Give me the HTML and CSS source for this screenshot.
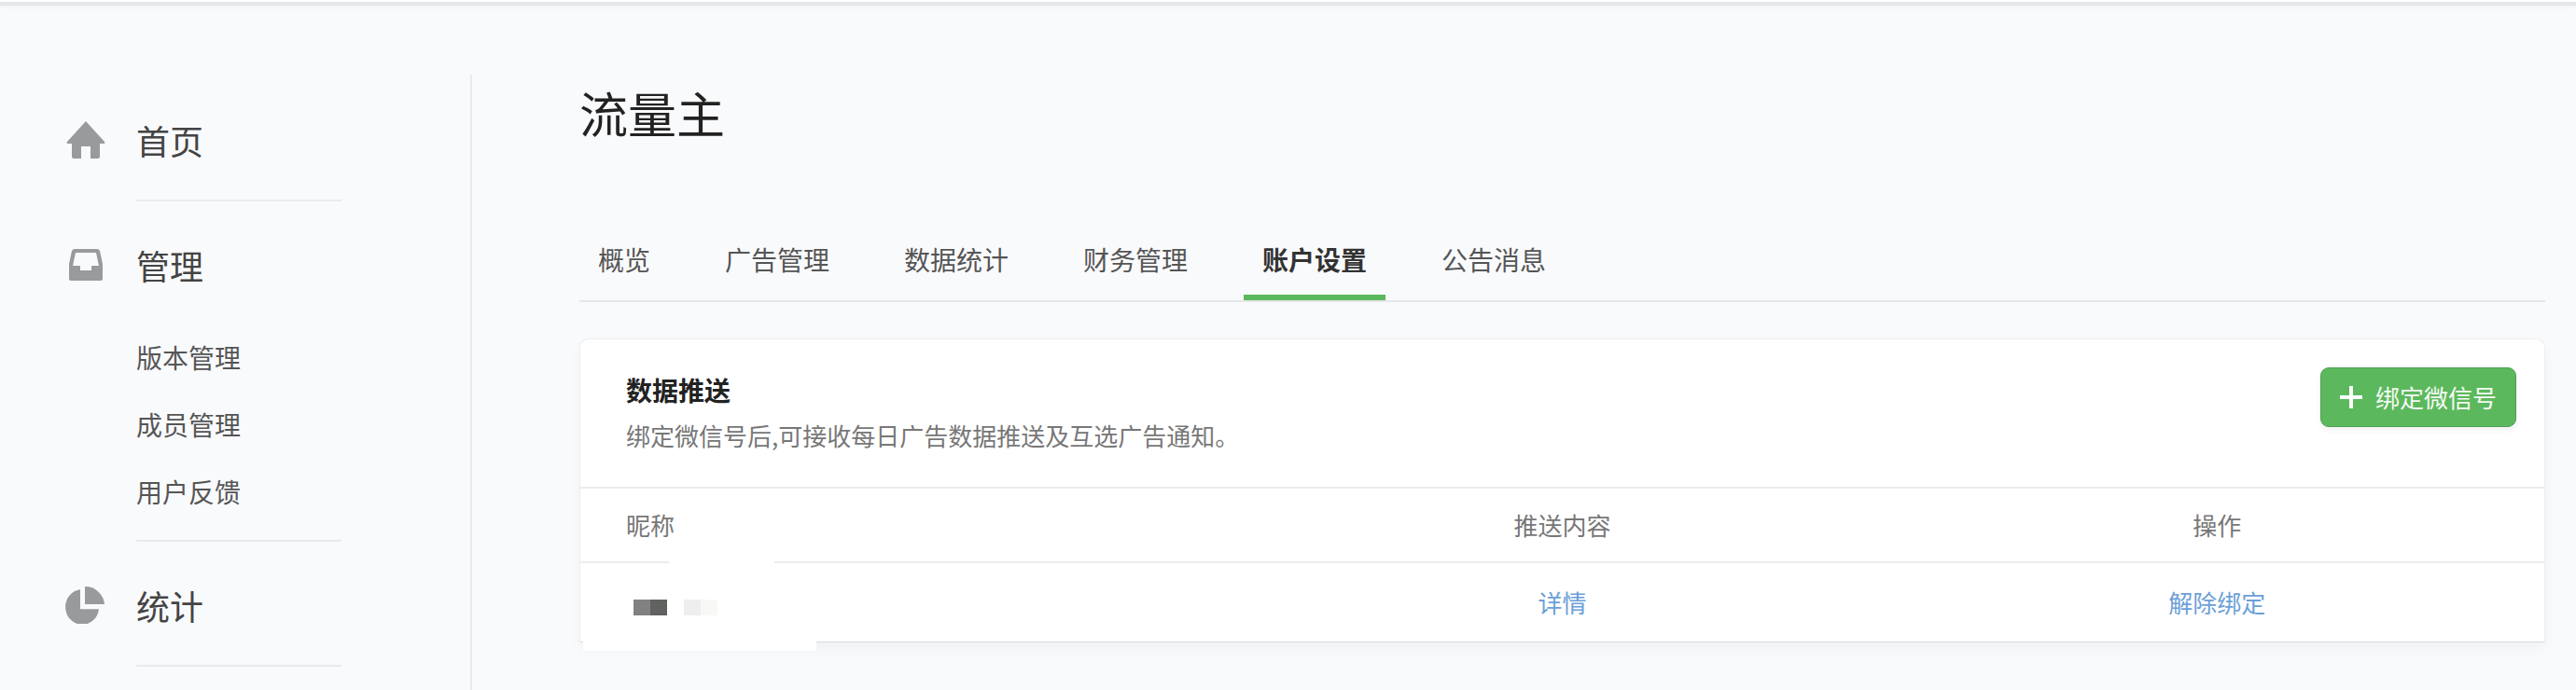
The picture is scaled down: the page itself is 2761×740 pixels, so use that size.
FILE: index.html
```html
<!DOCTYPE html>
<html lang="zh-CN">
<head>
  <meta charset="UTF-8" />
  <title>流量主</title>
  <link rel="stylesheet" href="styles.css">
</head>
<body>
  <div class="topbar"></div>

  <div class="layout">
    <!-- 侧边栏 -->
    <nav class="sidebar">
      <div class="nav-head">
        <svg class="nav-icon" viewBox="0 0 44 40" width="44" height="40">
          <path fill="#999a9c" d="M22 0 L42 22 Q43 24 41 24 L37 24 L37 38 Q37 40 35 40 L27 40 L27 27 L17 27 L17 40 L9 40 Q7 40 7 38 L7 24 L3 24 Q1 24 2 22 Z" />
        </svg>
        <span>首页</span>
      </div>
      <div class="nav-sep"></div>

      <div class="nav-head">
        <svg class="nav-icon" viewBox="0 0 44 34" width="44" height="34">
          <path fill="#999a9c" fill-rule="evenodd" d="M10 0 L34 0 Q36 0 37 2 L40 16 L40 32 Q40 34 38 34 L6 34 Q4 34 4 32 L4 16 L7 2 Q8 0 10 0 Z M11 4 L8 18 L15 18 Q16 18 16 19 L16 23 L28 23 L28 19 Q28 18 29 18 L36 18 L33 4 Z" />
        </svg>
        <span>管理</span>
      </div>
      <ul class="nav-sub">
        <li>版本管理</li>
        <li>成员管理</li>
        <li>用户反馈</li>
      </ul>
      <div class="nav-sep"></div>

      <div class="nav-head">
        <svg class="nav-icon" viewBox="0 0 44 40" width="44" height="40">
          <path fill="#999a9c" d="M17 4 L17 24 L37 24 A18 18 0 1 1 17 4 Z" transform="translate(-1 -1) scale(1 1.05)" />
          <path fill="#999a9c" d="M21 0 A21 21 0 0 1 42 19 L21 19 Z" />
        </svg>
        <span>统计</span>
      </div>
      <div class="nav-sep"></div>
    </nav>

    <!-- 内容区 -->
    <main class="main">
      <h1 class="page-title">流量主</h1>

      <div class="tabs">
        <a class="tab">概览</a>
        <a class="tab">广告管理</a>
        <a class="tab">数据统计</a>
        <a class="tab">财务管理</a>
        <a class="tab active">账户设置</a>
        <a class="tab">公告消息</a>
      </div>

      <section class="card">
        <div class="card-head">
          <div class="card-text">
            <h2>数据推送</h2>
            <p>绑定微信号后,可接收每日广告数据推送及互选广告通知。</p>
          </div>
          <button class="btn-green" type="button"><span class="plus"></span>绑定微信号</button>
        </div>

        <div class="row row-title">
          <div class="cell-first">昵称</div>
          <div>推送内容</div>
          <div>操作</div>
        </div>
        <div class="row row-body">
          <div class="cell-first">
            <div class="nick">
              <i class="px px1"></i><i class="px px2"></i><i class="px px3"></i><i class="px px4"></i>
            </div>
          </div>
          <div><a class="link">详情</a></div>
          <div><a class="link">解除绑定</a></div>
        </div>

        <!-- 打码留下的白块 -->
        <div class="patch patch-line"></div>
        <div class="patch patch-bottom"></div>
      </section>
    </main>
  </div>
</body>
</html>
```

FILE: styles.css
```css
/* 全局 */
html, body {
  height: 100%;
}

body {
  margin: 0;
  height: 740px;
  overflow: hidden;
  background: #f9fafc;
  color: #444;
  font-family: "Noto Sans CJK SC", "Noto Sans", sans-serif;
}

.topbar {
  height: 6px;
  box-sizing: border-box;
  background: #fff;
  border-bottom: 4px solid #e6e7e9;
  box-shadow: 0 2px 5px rgba(0, 0, 0, 0.03);
}

.layout {
  display: flex;
  margin-top: 74px;
  height: 660px;
}

/* 侧边栏 */
.sidebar {
  width: 434px;
  flex-shrink: 0;
  padding: 35px 0 0 70px;
  border-right: 2px solid #e9eaec;
}

.nav-head {
  display: flex;
  align-items: center;
  height: 70px;
  font-size: 36px;
  line-height: 70px;
  color: #444;
}

.nav-head span {
  margin-left: 32px;
}

.nav-icon {
  display: block;
  flex-shrink: 0;
}

.nav-sep {
  width: 220px;
  height: 2px;
  margin: 29px 0 33px 76px;
  background: #e9eaec;
}

.nav-sub {
  list-style: none;
  margin: 28px 0 -13px 76px;
  padding: 0;
}

.nav-sub li {
  height: 72px;
  font-size: 28px;
  line-height: 72px;
  color: #555;
}

/* 内容区 */
.main {
  flex: 1;
  min-width: 0;
  padding: 0 33px 0 115px;
}

.page-title {
  margin: 11px 0 0;
  font-size: 52px;
  font-weight: 400;
  line-height: 60px;
  color: #222;
}

.tabs {
  display: flex;
  gap: 40px;
  margin-top: 82px;
  border-bottom: 2px solid #e6e7e9;
}

.tab {
  padding: 25px 20px 18px;
  border-bottom: 6px solid transparent;
  font-size: 28px;
  line-height: 40px;
  color: #555;
}

.tab.active {
  border-bottom-color: #5cb85c;
  font-weight: 700;
  color: #333;
}

/* 卡片 */
.card {
  position: relative;
  margin-top: 39px;
  background: #fff;
  border: 1px solid #eceef0;
  border-bottom-color: #d8d9db;
  border-radius: 10px 10px 0 0;
  box-shadow: 0 6px 14px rgba(0, 0, 0, 0.04);
}

.card-head {
  display: flex;
  justify-content: space-between;
  align-items: flex-start;
  padding: 30px 30px 35px 49px;
  border-bottom: 2px solid #ecedef;
}

.card-text {
  padding-top: 4px;
}

.card-text h2 {
  margin: 0;
  font-size: 28px;
  font-weight: 700;
  line-height: 40px;
  color: #222;
}

.card-text p {
  margin: 9px 0 0;
  font-size: 26px;
  line-height: 40px;
  color: #777;
}

.btn-green {
  display: flex;
  align-items: center;
  box-sizing: border-box;
  width: 210px;
  height: 64px;
  padding: 0 0 0 20px;
  background: #5cb85c;
  border: 1px solid #4f9f56;
  border-radius: 9px;
  box-shadow: 0 3px 6px rgba(0, 0, 0, 0.06);
  color: #f4faf4;
  font-family: inherit;
  font-size: 26px;
  line-height: 40px;
}

.plus {
  position: relative;
  width: 24px;
  height: 24px;
  margin-right: 14px;
}

.plus::before,
.plus::after {
  content: "";
  position: absolute;
  background: #fff;
}

.plus::before {
  left: 0;
  right: 0;
  top: 10px;
  height: 4px;
}

.plus::after {
  top: 0;
  bottom: 0;
  left: 10px;
  width: 4px;
}

/* 表格行 */
.row {
  display: grid;
  grid-template-columns: repeat(3, 1fr);
  align-items: center;
  font-size: 26px;
  line-height: 40px;
  text-align: center;
}

.row-title {
  height: 78px;
  border-bottom: 2px solid #ecedef;
  color: #777;
}

.row-body {
  height: 84px;
}

.cell-first {
  padding-left: 49px;
  text-align: left;
}

.link {
  color: #6b9fd8;
}

.nick {
  display: flex;
  margin: 13px 0 0 8px;
}

.px {
  display: block;
  width: 18px;
  height: 19px;
}

.px1 { background: #808180; }
.px2 { background: #606260; }
.px3 { margin-left: 18px; background: #eeeeee; }
.px4 { background: #f8f8f7; }

.patch {
  position: absolute;
  background: #fff;
}

.patch-line {
  left: 95px;
  top: 236px;
  width: 113px;
  height: 6px;
}

.patch-bottom {
  left: 3px;
  top: 296px;
  width: 250px;
  height: 38px;
}
```
